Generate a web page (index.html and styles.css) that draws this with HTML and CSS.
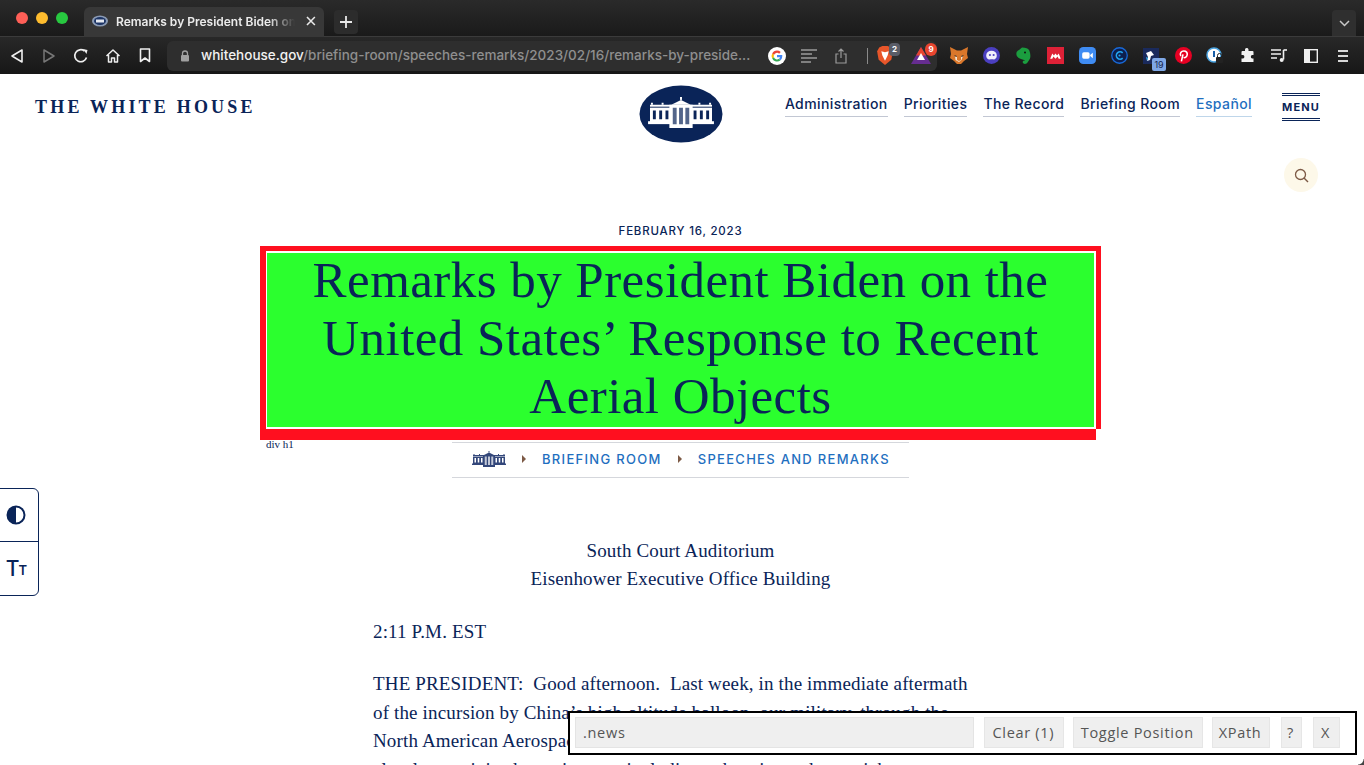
FILE: index.html
```html
<!DOCTYPE html>
<html lang="en">
<head>
    <meta charset="UTF-8">
    <meta name="viewport" content="width=device-width, initial-scale=1.0">
    <title>Remarks by President Biden on the United States' Response to Recent Aerial Objects</title>
    <link rel="stylesheet" href="styles.css">
</head>
<body>

<svg class="defs" width="0" height="0">
    <symbol id="wh-building" viewBox="0 0 68 32">
        <path d="M24 8 L34 3 L44 8 Z" fill="currentColor"/>
        <rect x="33" y="0" width="2" height="3" fill="currentColor"/>
        <rect x="2" y="8" width="64" height="2" fill="currentColor"/>
        <path d="M3 6h2v2H3zM14 6h2v2h-2zM52 6h2v2h-2zM63 6h2v2h-2z" fill="currentColor"/>
        <rect x="2" y="11" width="64" height="1.500" fill="currentColor"/>
        <rect x="2" y="12" width="22" height="14" fill="currentColor"/>
        <rect x="44" y="12" width="22" height="14" fill="currentColor"/>
        <rect x="0" y="25" width="68" height="3" fill="currentColor"/>
        <rect x="22" y="8" width="24" height="24" fill="currentColor"/>
        <path d="M5 14h3v9H5zM11.500 14h3v9h-3zM18 14h3v9h-3zM47 14h3v9h-3zM53.500 14h3v9h-3zM60 14h3v9h-3z" fill="var(--wh-bg)"/>
        <path d="M25.500 11h4v17h-4zM32 11h4v17h-4zM38.500 11h4v17h-4z" fill="var(--wh-bg)" opacity=".7"/>
    </symbol>
</svg>

<div class="browser">
    <div class="tabbar">
        <div class="traffic">
            <span class="dot dot-red"></span>
            <span class="dot dot-yellow"></span>
            <span class="dot dot-green"></span>
        </div>
        <div class="tab">
            <svg class="tab-icon" width="16" height="12" viewBox="0 0 16 12">
                <ellipse cx="8" cy="6" rx="8" ry="5.500" fill="#8b9bb5"/>
                <ellipse cx="8" cy="6" rx="6" ry="4" fill="#1d3566"/>
                <rect x="4" y="4.500" width="8" height="3" fill="#e4e8f0"/>
            </svg>
            <span class="tab-title">Remarks by President Biden on</span>
            <svg class="tab-close" width="10" height="10" viewBox="0 0 10 10"><path d="M1 1l8 8M9 1l-8 8" stroke="#e8e8e8" stroke-width="1.600"/></svg>
        </div>
        <div class="new-tab">
            <svg width="14" height="14" viewBox="0 0 14 14"><path d="M7 1v12M1 7h12" stroke="#e8e8e8" stroke-width="1.800"/></svg>
        </div>
        <div class="tab-menu">
            <svg width="11" height="7" viewBox="0 0 11 7"><path d="M1 1l4.500 4.500L10 1" fill="none" stroke="#c8c8c8" stroke-width="1.500"/></svg>
        </div>
    </div>
    <div class="toolbar">
        <div class="tool"><svg width="14" height="16" viewBox="0 0 14 16"><path d="M12 2v12L2 8z" fill="none" stroke="#efefef" stroke-width="1.600" stroke-linejoin="round"/></svg></div>
        <div class="tool"><svg width="14" height="16" viewBox="0 0 14 16"><path d="M2 2v12l10-6z" fill="none" stroke="#777" stroke-width="1.500" stroke-linejoin="round"/></svg></div>
        <div class="tool"><svg width="16" height="16" viewBox="0 0 16 16"><path d="M13.500 9.500A6 6 0 1 1 11.500 3" fill="none" stroke="#efefef" stroke-width="1.700"/><path d="M10 1l4.500 1-1 4z" fill="#efefef"/></svg></div>
        <div class="tool"><svg width="16" height="16" viewBox="0 0 16 16"><path d="M1.500 8L8 2l6.500 6M3.500 7v7h3v-4h3v4h3V7" fill="none" stroke="#efefef" stroke-width="1.500" stroke-linejoin="round"/></svg></div>
        <div class="tool"><svg width="12" height="15" viewBox="0 0 12 15"><path d="M1.500 1h9v12.500L6 10l-4.500 3.500z" fill="none" stroke="#efefef" stroke-width="1.600" stroke-linejoin="round"/></svg></div>

        <div class="urlbar">
            <svg class="lock" width="10" height="12" viewBox="0 0 10 12"><path d="M2.500 5V3.500a2.500 2.500 0 0 1 5 0V5" fill="none" stroke="#a0a0a0" stroke-width="1.300"/><rect x="1" y="5" width="8" height="6.500" rx="1" fill="#a0a0a0"/></svg>
            <span class="url"><span class="url-host">whitehouse.gov</span>/briefing-room/speeches-remarks/2023/02/16/remarks-by-preside...</span>
            <div class="url-icons">
                <div class="tool"><svg width="18" height="18" viewBox="0 0 16 16"><circle cx="8" cy="8" r="8" fill="#fff"/><path d="M8 3.200a4.800 4.800 0 0 1 3.300 1.300L9.900 5.900A2.900 2.900 0 0 0 5.300 7L3.700 5.800A4.800 4.800 0 0 1 8 3.200z" fill="#ea4335"/><path d="M3.700 5.800L5.300 7a2.900 2.900 0 0 0 0 2L3.700 10.200a4.800 4.800 0 0 1 0-4.400z" fill="#fbbc05"/><path d="M3.700 10.200L5.300 9a2.900 2.900 0 0 0 4.400 1.500l1.500 1.200A4.800 4.800 0 0 1 3.700 10.200z" fill="#34a853"/><path d="M12.700 7.100H8v1.900h2.700a2.300 2.300 0 0 1-1 1.500l1.500 1.200c1-.9 1.600-2.300 1.500-4.600z" fill="#4285f4"/></svg></div>
                <div class="tool"><svg width="16" height="14" viewBox="0 0 16 14"><path d="M0 1h16M0 5h11M0 9h16M0 13h10" stroke="#9a9a9a" stroke-width="1.700"/></svg></div>
                <div class="tool"><svg width="12" height="16" viewBox="0 0 12 16"><path d="M3.500 6H1v9h10V6H8.500M6 10V1M3.500 3.500L6 1l2.500 2.500" fill="none" stroke="#9a9a9a" stroke-width="1.200"/></svg></div>
                <span class="url-sep"></span>
                <div class="tool tool-badge">
                    <svg width="16" height="19" viewBox="0 0 15 18"><path d="M2 1.500L5 0h5l3 1.500L15 5l-1.500 8-6 5-6-5L0 5z" fill="#e8562a"/><path d="M4 5l3.500 1L11 5l-1 4-2.500 5-2.500-5z" fill="#fff"/></svg>
                    <span class="badge badge-grey">2</span>
                </div>
                <div class="tool tool-badge">
                    <svg width="20" height="17" viewBox="0 0 20 17"><path d="M10 0l10 17H0z" fill="#662d91"/><path d="M10 0l5 8.500H5z" fill="#e8452f"/><path d="M10 6l4 7H6z" fill="#fff"/></svg>
                    <span class="badge badge-red">9</span>
                </div>
            </div>
        </div>

        <div class="tool ext-first"><svg width="18" height="17" viewBox="0 0 18 17"><path d="M0 0l7 3.500h4L18 0l-1 7 1 4-4 3-3 3H7l-3-3-4-3 1-4z" fill="#d9772b"/><path d="M5 9l2 1v3l2 1 2-1v-3l2-1-1.500 4L9 15l-3.500-2z" fill="#f5e4d0"/><path d="M4 8l3 1-1 1zM14 8l-3 1 1 1z" fill="#2b2b2b"/></svg></div>
        <div class="tool"><svg width="17" height="17" viewBox="0 0 16 16"><circle cx="8" cy="8" r="8" fill="#4b3fc0"/><path d="M3 8a5 4.500 0 0 1 10 0c0 2.500-1.500 3-2 3.500-1 .5-1.500 0-2.500 0S6 12 5 11.500 3 10 3 8z" fill="#f1effc"/><circle cx="6.500" cy="7.500" r="1" fill="#4b3fc0"/><circle cx="10" cy="7.500" r="1" fill="#4b3fc0"/></svg></div>
        <div class="tool"><svg width="15" height="18" viewBox="0 0 15 17"><path d="M3 2.500L6 0c4 0 6 1 7 2.500S15 9 14 11s-2 3-2.500 4-2.500 2-4 1-1-3 1-3-2 -1-3.500-1.500S1 10 .5 7.500 1 3.500 3 2.500z" fill="#1b9e3f"/><circle cx="9" cy="5" r="1" fill="#111"/></svg></div>
        <div class="tool"><svg width="17" height="17" viewBox="0 0 16 16"><rect width="16" height="16" fill="#de2137"/><path d="M3 11l2-5 1.500 2 1.500-2 1.500 2L11 6l2 5h-2l-1-2-2 2-2-2-1 2z" fill="#fff"/></svg></div>
        <div class="tool"><svg width="17" height="17" viewBox="0 0 16 16"><rect width="16" height="16" rx="4" fill="#3f8cf3"/><rect x="3" y="5" width="7" height="6" rx="1.500" fill="#fff"/><path d="M10.500 7.500L13 5.500v5l-2.500-2z" fill="#fff"/></svg></div>
        <div class="tool"><svg width="17" height="17" viewBox="0 0 16 16"><circle cx="8" cy="8" r="7.300" fill="#0d1f4d" stroke="#1869d8" stroke-width="1.200"/><path d="M11 5.500a3.500 3.500 0 1 0 0 5" fill="none" stroke="#22a5f0" stroke-width="1.500"/><circle cx="8" cy="8" r="1" fill="#22a5f0"/></svg></div>
        <div class="tool tool-badge">
            <svg width="16" height="16" viewBox="0 0 16 16"><rect width="16" height="16" fill="#1a2a5c"/><path d="M3 5l5-2 3 4-3 1-1 4-3 1 1-4z" fill="#fff"/><path d="M3 9l2 1-1 3z" fill="#32b8f0"/></svg>
            <span class="badge badge-count">19</span>
        </div>
        <div class="tool"><svg width="17" height="17" viewBox="0 0 16 16"><circle cx="8" cy="8" r="8" fill="#e60023"/><path d="M6 13.500l1.500-6.500M5.500 8.500C4 6 6 3.800 8.300 3.800c2.300 0 3.500 1.500 3.200 3.500-.3 2-2 3.300-3.400 2.500" fill="none" stroke="#fff" stroke-width="1.500"/></svg></div>
        <div class="tool"><svg width="18" height="18" viewBox="0 0 18 18"><circle cx="8" cy="8" r="7" fill="#fff" stroke="#4aa3e0" stroke-width="1.500"/><path d="M8 4v6" stroke="#1a5fa8" stroke-width="2"/><rect x="10" y="10" width="7" height="6" rx="1" fill="#222"/><path d="M11.500 10V8.500a2 2 0 0 1 4 0V10" fill="none" stroke="#222" stroke-width="1"/></svg></div>
        <div class="tool"><svg width="15" height="15" viewBox="0 0 15 15"><path d="M5 1.500a1.800 1.800 0 0 1 3.500 0V3h4a1 1 0 0 1 1 1v3h-1.300a1.800 1.800 0 0 0 0 3.500H13.500V14H1.500v-3.500H3a1.800 1.800 0 0 0 0-3.500H1.500V4a1 1 0 0 1 1-1H5z" fill="#f2f2f2"/></svg></div>
        <div class="tool"><svg width="16" height="14" viewBox="0 0 16 14"><path d="M0 1h10M0 5h10M0 9h6" stroke="#efefef" stroke-width="1.500"/><path d="M12.500 1v9.500" stroke="#efefef" stroke-width="1.600"/><path d="M12.500 1H16" stroke="#efefef" stroke-width="1.600"/><circle cx="10.700" cy="11" r="2" fill="#efefef"/></svg></div>
        <div class="tool"><svg width="14" height="14" viewBox="0 0 14 14"><rect x=".7" y=".7" width="12.600" height="12.600" fill="none" stroke="#efefef" stroke-width="1.400"/><rect x="1" y="1" width="5" height="12" fill="#efefef"/></svg></div>
        <div class="tool"><svg width="12" height="14" viewBox="0 0 12 14"><path d="M1 2h10M1 7h10M1 12h10" stroke="#d8d8d8" stroke-width="1.800"/></svg></div>
    </div>
</div>

<div class="page">
    <header class="site-header">
        <a class="site-name">THE WHITE HOUSE</a>
        <svg class="seal" width="84" height="58" viewBox="0 0 84 58">
            <ellipse cx="42" cy="29" rx="41.500" ry="28.500" fill="#0a2458"/>
            <use href="#wh-building" x="9" y="12" width="66" height="31"/>
        </svg>
        <nav class="site-nav">
            <a class="nav-link">Administration</a>
            <a class="nav-link">Priorities</a>
            <a class="nav-link">The Record</a>
            <a class="nav-link">Briefing Room</a>
            <a class="nav-link nav-link-es">Español</a>
        </nav>
        <div class="menu-btn">MENU</div>
    </header>

    <div class="search-row">
        <div class="search-btn">
            <svg width="15" height="15" viewBox="0 0 15 15"><circle cx="6.500" cy="6.500" r="5" fill="none" stroke="#7d5a46" stroke-width="1.300"/><path d="M10 10l4 4" stroke="#7d5a46" stroke-width="1.500"/></svg>
        </div>
    </div>

    <main class="article">
        <p class="post-date">FEBRUARY 16, 2023</p>

        <div class="title-wrap">
            <h1 class="title"><span class="title-text">Remarks by President Biden on the United States’ Response to Recent Aerial Objects</span></h1>
            <span class="sg-bar sg-top"></span>
            <span class="sg-bar sg-left"></span>
            <span class="sg-bar sg-right"></span>
            <span class="sg-bar sg-bottom"></span>
            <span class="sg-label">div h1</span>
        </div>

        <div class="crumbs">
            <svg class="crumb-home" width="34" height="16"><use href="#wh-building" width="34" height="16"/></svg>
            <span class="crumb-arrow"></span>
            <a class="crumb">BRIEFING ROOM</a>
            <span class="crumb-arrow"></span>
            <a class="crumb">SPEECHES AND REMARKS</a>
        </div>

        <div class="body-text">
            <p class="center">South Court Auditorium<br>Eisenhower Executive Office Building</p>
            <p>2:11 P.M. EST</p>
            <p>THE PRESIDENT:&nbsp; Good afternoon.&nbsp; Last week, in the immediate aftermath of the incursion by China’s high-altitude balloon, our military, through the North American Aerospace Defense Command,<br>closely scrutinized our airspace, including enhancing radar to pick up</p>
        </div>
    </main>
</div>

<div class="a11y-panel">
    <div class="a11y-btn a11y-contrast">
        <svg width="20" height="20" viewBox="0 0 20 20"><circle cx="10" cy="10" r="8.500" fill="none" stroke="#0a2458" stroke-width="2"/><path d="M10 1.500a8.500 8.500 0 0 0 0 17z" fill="#0a2458"/></svg>
    </div>
    <div class="a11y-btn">
        <span class="tt-big">T</span><span class="tt-small">T</span>
    </div>
</div>

<div class="gadget">
    <div class="gadget-input">.news</div>
    <div class="gadget-btn gadget-clear">Clear (1)</div>
    <div class="gadget-btn gadget-toggle">Toggle Position</div>
    <div class="gadget-btn gadget-xpath">XPath</div>
    <div class="gadget-btn gadget-help">?</div>
    <div class="gadget-btn gadget-close">X</div>
</div>

<div class="window-corner"></div>

</body>
</html>
```

FILE: styles.css
```css
* {
    box-sizing: border-box;
}
html, body {
    margin: 0;
    height: 765px;
    overflow: hidden;
    background-color: #fff;
}
body {
    font-family: "Liberation Serif", serif;
    color: #0a2458;
}
a {
    text-decoration: none;
}
.defs {
    display: block;
    height: 0;
}

/* browser chrome */
.browser {
    height: 74px;
    background-color: #1d1d1d;
    font-family: Inter, "Liberation Sans", sans-serif;
}
.tabbar {
    height: 37px;
    display: flex;
    align-items: flex-end;
    background: linear-gradient(#2a2a2a, #1a1a1a);
    border-bottom: 1px solid #3b3b3b;
}
.traffic {
    width: 84px;
    height: 36px;
    display: flex;
    gap: 8px;
    padding: 12px 0 0 16px;
}
.dot {
    width: 12px;
    height: 12px;
    border-radius: 50%;
}
.dot-red { background-color: #fe5f57; }
.dot-yellow { background-color: #febc2e; }
.dot-green { background-color: #28c840; }
.tab {
    width: 240px;
    height: 30px;
    margin-bottom: -1px;
    padding: 0 8px 2px;
    display: flex;
    align-items: center;
    background-color: #383838;
    border-radius: 6px 6px 0 0;
}
.tab-icon {
    flex: none;
}
.tab-title {
    width: 182px;
    margin-left: 8px;
    font-size: 12px;
    font-weight: 600;
    color: #ececec;
    white-space: nowrap;
    overflow: hidden;
    -webkit-mask-image: linear-gradient(90deg, #000 85%, transparent);
    mask-image: linear-gradient(90deg, #000 85%, transparent);
}
.tab-close {
    margin-left: 11px;
}
.new-tab {
    width: 24px;
    height: 24px;
    margin: 0 0 2px 10px;
    display: flex;
    align-items: center;
    justify-content: center;
    background-color: #2c2c2c;
    border-radius: 4px;
}
.tab-menu {
    width: 24px;
    height: 26px;
    margin: 0 8px 0 auto;
    display: flex;
    align-items: center;
    justify-content: center;
    background-color: #2f2f2f;
    border-radius: 4px 4px 0 0;
}
.toolbar {
    height: 37px;
    padding-left: 1px;
    display: flex;
    align-items: center;
    background: linear-gradient(#282828, #171717);
}
.tool {
    position: relative;
    flex: none;
    width: 32px;
    height: 28px;
    display: flex;
    align-items: center;
    justify-content: center;
}
.urlbar {
    width: 770px;
    height: 30px;
    margin-left: 6px;
    padding-left: 13px;
    display: flex;
    align-items: center;
    background-color: #2e2e2e;
    border-radius: 6px;
}
.lock {
    flex: none;
}
.url {
    margin: -2px 0 0 11px;
    width: 554px;
    font-size: 13.500px;
    font-weight: 500;
    color: #8f8f8f;
    white-space: nowrap;
}
.url-host {
    color: #f2f2f2;
}
.url-icons {
    display: flex;
    align-items: center;
    margin-left: 6px;
}
.url-sep {
    width: 1px;
    height: 16px;
    margin: 0 -3px 0 10px;
    background-color: #8a8a8a;
}
.tool-badge {
    margin-left: 4px;
}
.badge {
    position: absolute;
    font-size: 8px;
    font-weight: 700;
    color: #fff;
    display: flex;
    align-items: center;
    justify-content: center;
}
.badge-grey {
    top: 1px;
    right: 1px;
    width: 11px;
    height: 13px;
    background-color: #5a5d68;
    border-radius: 4px;
}
.badge-red {
    top: 1px;
    right: 0;
    width: 12px;
    height: 13px;
    background-color: #e8452f;
    border-radius: 6px;
}
.badge-count {
    top: 16px;
    right: 1px;
    width: 14px;
    height: 13px;
    font-weight: 400;
    font-size: 9px;
    color: #16264f;
    background-color: #7fa8e6;
    border-radius: 2px;
}
.ext-first {
    margin-left: 6px;
}
.toolbar > .tool-badge {
    margin-left: 0;
}

/* site header */
.page {
    height: 691px;
}
.site-header {
    height: 70px;
    padding: 11px 44px 0 35px;
    display: flex;
    align-items: flex-start;
    position: relative;
}
.site-name {
    margin-top: 12px;
    font-size: 18px;
    font-weight: 700;
    letter-spacing: 3.200px;
    line-height: 20px;
    color: #0a2458;
}
.seal {
    position: absolute;
    left: 639px;
    top: 11px;
    color: #fff;
    --wh-bg: #0a2458;
}
.site-nav {
    margin-left: auto;
    padding-top: 9px;
    display: flex;
    gap: 16px;
    font-family: Inter, "Liberation Sans", sans-serif;
}
.nav-link {
    height: 23px;
    font-size: 14px;
    font-weight: 500;
    letter-spacing: .4px;
    line-height: 19px;
    white-space: nowrap;
    color: #0a2458;
    border-bottom: 1px solid #c2c7d3;
}
.nav-link-es {
    color: #1f6fc0;
    border-bottom-color: #bfd6ea;
}
.menu-btn {
    width: 38px;
    height: 28px;
    margin: 8px 0 0 30px;
    font-family: Inter, "Liberation Sans", sans-serif;
    font-size: 11px;
    font-weight: 700;
    letter-spacing: 1.100px;
    line-height: 22px;
    text-align: center;
    white-space: nowrap;
    color: #0a2458;
    border-top: 3px double #0a2458;
    border-bottom: 3px double #0a2458;
}
.search-row {
    height: 34px;
    margin-top: 14px;
    padding-right: 46px;
    display: flex;
    justify-content: flex-end;
}
.search-btn {
    width: 34px;
    height: 34px;
    display: flex;
    align-items: center;
    justify-content: center;
    background-color: #fdf8e9;
    border-radius: 50%;
}

/* article */
.article {
    width: 827px;
    margin: 0 0 0 267px;
}
.post-date {
    margin: 31px 0 0;
    font-family: Inter, "Liberation Sans", sans-serif;
    font-size: 11.500px;
    font-weight: 500;
    line-height: 16px;
    letter-spacing: .8px;
    text-align: center;
}
.title-wrap {
    position: relative;
    margin-top: 14px;
}
.title {
    height: 174px;
    margin: 0;
    padding: 0 40px;
    display: flow-root;
    font-size: 51px;
    font-weight: 400;
    line-height: 58px;
    letter-spacing: .45px;
    text-align: center;
    color: #0a2458;
    background-color: #2bff2e;
}
.title-text {
    display: block;
    margin-top: -2px;
}
.sg-bar {
    position: absolute;
    background-color: #ff0f1f;
}
.sg-top {
    left: -7px;
    top: -7px;
    width: 841px;
    height: 5px;
}
.sg-left {
    left: -7px;
    top: -7px;
    width: 6px;
    height: 183px;
}
.sg-right {
    left: 829px;
    top: -7px;
    width: 5px;
    height: 183px;
}
.sg-bottom {
    left: -7px;
    top: 176px;
    width: 836px;
    height: 11px;
}
.sg-label {
    position: absolute;
    left: -1px;
    top: 185px;
    font-size: 11px;
    line-height: 13px;
}
.crumbs {
    width: 457px;
    height: 36px;
    margin: 15px 0 0 185px;
    padding: 0 0 2px 20px;
    display: flex;
    align-items: center;
    border-top: 1px solid #d5d7dc;
    border-bottom: 1px solid #d5d7dc;
    color: #33477a;
    --wh-bg: #fff;
    font-family: Inter, "Liberation Sans", sans-serif;
}
.crumb-home {
    flex: none;
}
.crumb-arrow {
    width: 0;
    height: 0;
    margin: 0 16px;
    border-top: 4px solid transparent;
    border-bottom: 4px solid transparent;
    border-left: 4px solid #7d5a46;
}
.crumb {
    font-size: 13px;
    font-weight: 500;
    letter-spacing: 1.300px;
    color: #1f6fc0;
}
.body-text {
    width: 610px;
    margin: 59px 0 0 106px;
    font-size: 19px;
    line-height: 28.500px;
    letter-spacing: .15px;
}
.body-text p {
    margin: 0 0 24px;
}
.body-text .center {
    width: 615px;
    margin-bottom: 24.500px;
    line-height: 28px;
    text-align: center;
}

/* floating a11y tab */
.a11y-panel {
    position: absolute;
    left: -1px;
    top: 488px;
    width: 40px;
    height: 108px;
    background-color: #fff;
    border: 1px solid #0a2458;
    border-radius: 0 6px 6px 0;
}
.a11y-btn {
    height: 53px;
    display: flex;
    align-items: center;
    justify-content: center;
    padding-right: 5px;
    color: #0a2458;
    font-family: Inter, "Liberation Sans", sans-serif;
}
.a11y-contrast {
    height: 52px;
    padding-right: 6px;
}
.a11y-btn + .a11y-btn {
    border-top: 1px solid #0a2458;
}
.tt-big {
    font-size: 21px;
    font-weight: 500;
    line-height: 1;
}
.tt-small {
    margin: 4px 0 0 -1px;
    font-size: 13px;
    font-weight: 600;
    line-height: 1;
}

/* selector gadget bar */
.gadget {
    position: absolute;
    left: 568px;
    top: 711px;
    width: 789px;
    height: 44px;
    padding: 4px 15px 0 5px;
    display: flex;
    background-color: #fff;
    border: 2px solid #000;
    font-family: "Open Sans", sans-serif;
    font-size: 14.500px;
    letter-spacing: .7px;
    color: #555;
}
.gadget-input {
    width: 400px;
    height: 31px;
    padding: 0 7px;
    line-height: 29px;
    background-color: #efefef;
    border: 1px solid #e4e4e4;
}
.gadget-btn {
    height: 31px;
    padding-right: 2px;
    line-height: 29px;
    text-align: center;
    white-space: nowrap;
    background-color: #efefef;
    border: 1px solid #e6e6e6;
}
.gadget-clear { width: 80px; margin-left: 10px; }
.gadget-toggle { width: 130px; margin-left: 9px; }
.gadget-xpath { width: 58px; margin-left: 9px; }
.gadget-help { width: 21px; margin-left: 11px; }
.gadget-close { width: 27px; margin-left: 11px; }

.window-corner {
    position: absolute;
    right: 0;
    bottom: 0;
    width: 6px;
    height: 6px;
    background: radial-gradient(circle at 0 0, transparent 5px, #444 6px);
}
```
